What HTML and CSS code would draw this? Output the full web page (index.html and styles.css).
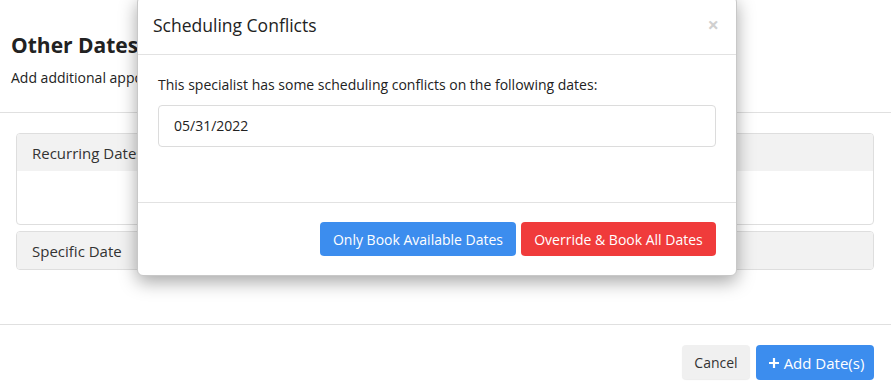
FILE: index.html
```html
<!DOCTYPE html>
<html>
<head>
<meta charset="utf-8">
<link rel="stylesheet" href="styles.css">
</head>
<body>
<div class="page">
  <div class="intro">
    <h2 class="title">Other Dates</h2>
    <p class="sub">Add additional appointment dates for this booking.</p>
  </div>
  <div class="content">
    <div class="panel">
      <div class="panel-head">Recurring Dates</div>
      <div class="panel-body"></div>
    </div>
    <div class="panel">
      <div class="panel-head">Specific Date</div>
    </div>
  </div>
  <div class="actions">
    <button class="btn btn-default">Cancel</button>
    <button class="btn btn-primary"><svg class="plus" width="12" height="12" viewBox="0 0 12 12"><path d="M6 1v10M1 6h10" stroke="#fff" stroke-width="2.2" fill="none"/></svg>Add Date(s)</button>
  </div>
</div>

<div class="modal">
  <div class="modal-head">
    <h4 class="modal-title">Scheduling Conflicts</h4>
    <span class="close">&times;</span>
  </div>
  <div class="modal-body">
    <p class="msg">This specialist has some scheduling conflicts on the following dates:</p>
    <ul class="dates">
      <li>05/31/2022</li>
    </ul>
  </div>
  <div class="modal-foot">
    <button class="btn btn-primary">Only Book Available Dates</button>
    <button class="btn btn-danger">Override &amp; Book All Dates</button>
  </div>
</div>
</body>
</html>
```
FILE: styles.css
```css
* { box-sizing: border-box; }
html, body { margin: 0; padding: 0; background: #fff; }
body {
  font-family: "Open Sans", "Noto Sans", sans-serif;
  font-size: 14px;
  color: #333;
  width: 891px;
  height: 391px;
  overflow: hidden;
  position: relative;
}
.intro {
  padding: 31px 11px 0;
  border-bottom: 1px solid #e0e0e0;
  height: 113px;
}
.title {
  margin: 0;
  font-size: 21px;
  font-weight: 700;
  line-height: 28px;
  color: #222;
}
.sub {
  margin: 9px 0 0;
  line-height: 20px;
  color: #222;
}
.content {
  padding: 20px 17px 0 16px;
  height: 212px;
  border-bottom: 1px solid #e0e0e0;
  display: flex;
  flex-direction: column;
  gap: 6px;
}
.panel {
  border: 1px solid #dedede;
  border-radius: 4px;
  overflow: hidden;
}
.panel-head {
  background: #f2f2f2;
  height: 37px;
  line-height: 38px;
  padding: 0 15px;
  font-size: 15px;
  color: #333;
}
.panel-body { height: 53px; }
.actions {
  display: flex;
  justify-content: flex-end;
  gap: 6px;
  padding: 20px 17px 0 0;
}
.btn {
  font-family: inherit;
  font-size: 14px;
  border: 0;
  border-radius: 4px;
  height: 34px;
  padding: 0;
  display: inline-flex;
  align-items: center;
  justify-content: center;
  white-space: nowrap;
  cursor: pointer;
}
.btn-default { background: #f0f0f0; color: #333; width: 68px; box-shadow: 0 1px 1px rgba(0,0,0,0.08); }
.btn-primary { background: #3c8dee; color: #fff; }
.btn-danger { background: #f03b3b; color: #fff; }
.actions .btn-primary { width: 118px; height: 35px; font-size: 15px; }
.plus { margin-right: 4px; margin-left: 2px; }

.modal {
  position: absolute;
  left: 137px;
  top: -4px;
  width: 600px;
  height: 280px;
  background: #fff;
  border: 1px solid #c8c8c8;
  border-radius: 6px;
  box-shadow: 0 6px 18px rgba(0,0,0,0.35);
  display: flex;
  flex-direction: column;
}
.modal-head {
  height: 58px;
  border-bottom: 1px solid #e2e2e2;
  padding: 15px 17px 0 15px;
  display: flex;
  justify-content: space-between;
  align-items: flex-start;
}
.modal-title {
  margin: 0;
  font-size: 17.5px;
  font-weight: 400;
  line-height: 26px;
  color: #222;
}
.close {
  font-size: 20px;
  font-weight: 700;
  color: #d0d0d0;
  line-height: 22px;
  margin-top: 2px;
}
.modal-body {
  padding: 20px 20px 0;
  height: 148px;
  border-bottom: 1px solid #e2e2e2;
}
.msg { margin: 0 0 10px; line-height: 20px; color: #222; }
.dates {
  list-style: none;
  margin: 0;
  padding: 0;
  border: 1px solid #dcdcdc;
  border-radius: 4px;
}
.dates li {
  height: 40px;
  line-height: 40px;
  padding: 0 15px;
  color: #222;
}
.modal-foot {
  display: flex;
  justify-content: flex-end;
  gap: 5px;
  padding: 19px 20px 0;
}
.modal-foot .btn { height: 34px; font-size: 14px; }
.modal-foot .btn-primary { width: 196px; }
.modal-foot .btn-danger { width: 195px; }
```
